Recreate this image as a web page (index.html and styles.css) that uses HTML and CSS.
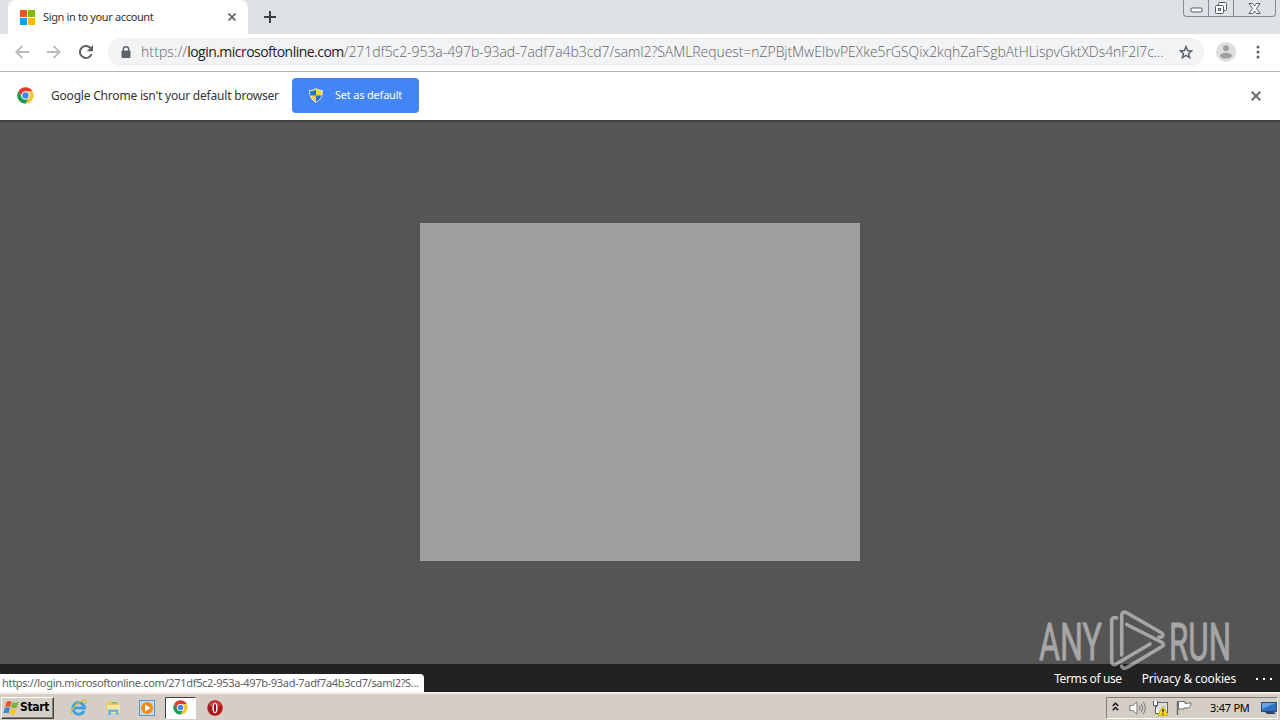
FILE: index.html
```html
<!DOCTYPE html>
<html lang="en">
<head>
    <meta charset="UTF-8">
    <title>Sign in to your account</title>
    <link rel="stylesheet" href="styles.css">
</head>
<body>
    <svg class="defs" width="0" height="0">
        <symbol id="chrome" viewBox="0 0 48 48">
            <circle cx="24" cy="24" r="23" fill="#fff"/>
            <path fill="#e33b2e" d="M4 12.500A23 23 0 0 1 44 12.500H24A11.500 11.500 0 0 0 14 29.800z"/>
            <path fill="#fbc52d" d="M44 12.500A23 23 0 0 1 24 47L34 29.800A11.500 11.500 0 0 0 24 12.500z"/>
            <path fill="#179c52" d="M4 12.500A23 23 0 0 0 24 47L34 29.800A11.500 11.500 0 0 1 14 29.800z"/>
            <circle cx="24" cy="24" r="11.500" fill="#fff"/>
            <circle cx="24" cy="24" r="9" fill="#4285f4"/>
        </symbol>
    </svg>

    <!-- Tab strip -->
    <div class="tabstrip">
        <div class="tab">
            <svg class="favicon" width="15" height="15" viewBox="0 0 15 15">
                <path fill="#f25022" d="M0 0h7v7H0z"/>
                <path fill="#7fba00" d="M8 0h7v7H8z"/>
                <path fill="#00a4ef" d="M0 8h7v7H0z"/>
                <path fill="#ffb900" d="M8 8h7v7H8z"/>
            </svg>
            <span class="tab-title">Sign in to your account</span>
            <svg class="tab-close" width="8" height="8" viewBox="0 0 8 8" stroke="#5f6368" stroke-width="1.700"><path d="M.5.5l7 7M7.500.5l-7 7"/></svg>
        </div>
        <svg class="new-tab" width="12" height="12" viewBox="0 0 12 12" stroke="#3c4043" stroke-width="2"><path d="M6 0v12M0 6h12"/></svg>
        <div class="window-buttons">
            <span class="win-btn">
                <svg width="13" height="6" viewBox="0 0 13 6"><rect x="1" y="1" width="11" height="4" rx="1" fill="#fff" stroke="#555b66"/></svg>
            </span>
            <span class="win-btn">
                <svg width="14" height="14" viewBox="0 0 14 14" fill="#fff" stroke="#555b66"><rect x="4.500" y="1.500" width="8" height="8" rx="1"/><rect x="1.500" y="4.500" width="8" height="8" rx="1"/><rect x="4.500" y="7.500" width="2" height="2"/></svg>
            </span>
            <span class="win-btn win-close">
                <svg width="13" height="11" viewBox="0 0 13 11"><path fill="#fff" stroke="#555b66" d="M1 .5h3.500l2 2.500 2-2.500H12L8.500 5.500 12 10.500H8.500l-2-2.500-2 2.500H1l3.500-5z"/></svg>
            </span>
        </div>
    </div>

    <!-- Toolbar -->
    <div class="toolbar">
        <svg class="nav-icon" width="14" height="14" viewBox="0 0 14 14" fill="none" stroke="#b9bbbe" stroke-width="1.800"><path d="M14 7H1.500M7.500.8L1.300 7l6.200 6.200"/></svg>
        <svg class="nav-icon" width="14" height="14" viewBox="0 0 14 14" fill="none" stroke="#b9bbbe" stroke-width="1.800"><path d="M0 7h12.500M6.500.8L12.700 7l-6.200 6.200"/></svg>
        <svg class="nav-icon" width="14" height="14" viewBox="0 0 14 14" fill="none" stroke="#5f6368" stroke-width="2"><path d="M12.600 9A6 6 0 1 1 11.300 2.800L12 3.600"/><path fill="#5f6368" stroke="none" d="M14 0v6.200H7.800z"/></svg>
        <div class="omnibox">
            <svg class="lock" width="10" height="12" viewBox="0 0 10 12"><rect x="0.500" y="4.500" width="9" height="7.500" rx="1" fill="#5f6368"/><path fill="none" stroke="#5f6368" stroke-width="1.400" d="M2.300 5V3.200a2.700 2.500 0 0 1 5.400 0V5"/></svg>
            <span class="url"><span class="scheme">https://</span><span class="host">login.microsoftonline.com</span><span class="path">/271df5c2-953a-497b-93ad-7adf7a4b3cd7/saml2?SAMLRequest=nZPBjtMwEIbvPEXke5rGSQix2kqhZaFSgbAtHLispvGktXDs4nF2l7c...</span></span>
            <svg class="star" width="14" height="14" viewBox="0 0 14 14"><path fill="none" stroke="#5f6368" stroke-width="1.500" d="M7 1.600l1.600 3.900 4.200.3-3.200 2.700 1 4.100L7 10.400l-3.600 2.200 1-4.100L1.200 5.800l4.200-.3z"/></svg>
        </div>
        <svg class="avatar" width="20" height="20" viewBox="0 0 20 20"><circle cx="10" cy="10" r="10" fill="#dedede"/><circle cx="10" cy="6.300" r="3" fill="#a0a0a0"/><ellipse cx="10" cy="13.700" rx="6" ry="2.900" fill="#a0a0a0"/></svg>
        <svg class="menu-dots" width="4" height="14" viewBox="0 0 4 14" fill="#5f6368"><circle cx="2" cy="2" r="1.500"/><circle cx="2" cy="7" r="1.500"/><circle cx="2" cy="12" r="1.500"/></svg>
    </div>

    <!-- Default browser bar -->
    <div class="infobar">
        <svg width="17" height="17"><use href="#chrome"/></svg>
        <span class="infobar-text">Google Chrome isn't your default browser</span>
        <button class="default-btn">
            <svg width="14" height="15" viewBox="0 0 14 15">
                <path fill="#f4d03a" stroke="#e8edf0" d="M7 .6C5 2 3 2.400.7 2.400.5 8 2.500 12 7 14.300c4.500-2.300 6.500-6.300 6.300-11.900C11 2.400 9 2 7 .6z"/>
                <path fill="#2373c8" d="M7 1.800V7.500h5.500c.3-1.500.3-3 .2-4.400C10.500 3 8.500 2.600 7 1.800zM7 7.500H1.500C2.300 10.500 4.200 12.500 7 13.800z" transform="matrix(-1 0 0 1 14 0)"/>
            </svg>
            <span>Set as default</span>
        </button>
        <svg class="infobar-close" width="10" height="10" viewBox="0 0 10 10" stroke="#696b6e" stroke-width="2"><path d="M.7.7l8.600 8.600M9.300.7L.7 9.300"/></svg>
    </div>

    <!-- Page -->
    <main class="page">
        <div class="login-box"></div>
        <footer class="footer">
            <span class="terms">Terms of use</span>
            <span class="privacy">Privacy &amp; cookies</span>
            <span class="more"><i></i><i></i><i></i></span>
        </footer>
        <div class="status-bubble"><span>https://login.microsoftonline.com/271df5c2-953a-497b-93ad-7adf7a4b3cd7/saml2?S...</span></div>
        <svg class="watermark" width="210" height="66" viewBox="0 0 210 66">
            <g class="watermark-text">
                <text x="2" y="50" textLength="63" lengthAdjust="spacingAndGlyphs">ANY</text>
                <text x="132" y="50" textLength="62" lengthAdjust="spacingAndGlyphs">RUN</text>
            </g>
            <g fill="none" stroke="#fff" stroke-width="3.600" stroke-linejoin="round" stroke-linecap="round">
                <path d="M79.500 8c-3-1-4.800 0-4.800 3V51.500c0 3 2 4 4.500 2.500L113 34"/>
                <path d="M84.700 45V5.500c0-3 2-4.300 4.500-3L124 22.500c3.500 2 1.500 5.500-2 4.500"/>
                <path d="M89.700 14.500l34.500 17.500c3 1.500 3 3.500 0 5L90 57.500c-3 1.500-5.300.500-5.300-1.500"/>
            </g>
        </svg>
    </main>

    <!-- Taskbar -->
    <div class="taskbar">
        <button class="start">
            <svg width="17" height="16" viewBox="0 0 17 16">
                <path fill="#e8562a" d="M3.500 2C5.500.6 7 .8 8.600 1.800L7.200 7.200C5.500 6.200 4 6.300 2 7.300z"/>
                <path fill="#76b43a" d="M9.400 2.200c2 1 4 .9 6.200-.4L14 7.200c-2 1.200-4 1.300-6 .4z"/>
                <path fill="#3f86d8" d="M1.800 8.200c2-1.200 3.700-1 5.200-.1L5.500 13.500C4 12.500 2.300 12.500.3 13.600z"/>
                <path fill="#f7c52c" d="M7.800 8.600c2 1 4 .9 6-.3l-1.600 5.500c-2 1.200-4 1.200-5.900.2z"/>
            </svg>
            <span>Start</span>
        </button>
        <div class="quick">
            <span class="task">
                <svg width="17" height="17" viewBox="0 0 17 17" fill="none"><path stroke="#3da2e2" stroke-width="3" d="M14 11.800A5.800 5.800 0 1 1 14.500 9H4"/><path stroke="#e6b93c" stroke-width="1.300" d="M2 15.500C-1 14 4 6 11 2.300c4-2 6-1 4.300 2.200"/></svg>
            </span>
            <span class="task">
                <svg width="16" height="16" viewBox="0 0 16 16"><path fill="#e9c862" d="M1 3l1-1.500h4L7 3h7v9H1z"/><path fill="#f8e6a0" d="M2 5h13v8H2z"/><path fill="#6bb5de" d="M3 9.500h10.500V15H11v-3H6v3H3z"/><path fill="#7dbb57" d="M7 2h5v1.500H7z"/></svg>
            </span>
            <span class="task">
                <svg width="16" height="16" viewBox="0 0 16 16"><rect x=".5" y=".5" width="15" height="15" fill="#c4dcf2" stroke="#5d93c8"/><circle cx="8" cy="8" r="6" fill="#f08a1d"/><path fill="#fff" d="M6 4.500L11.500 8 6 11.500z"/></svg>
            </span>
            <span class="task active">
                <svg width="15" height="15"><use href="#chrome"/></svg>
            </span>
            <span class="task">
                <svg width="16" height="16" viewBox="0 0 16 16"><circle cx="8" cy="8" r="7.700" fill="#b3151b"/><path fill="#d9413f" d="M2 5a7 7 0 0 1 12 0c-3 2-9 2-12 0z"/><ellipse cx="8" cy="8" rx="2.600" ry="5.300" fill="#fff"/><ellipse cx="8" cy="8" rx="1.100" ry="4.300" fill="#8d0f14"/></svg>
            </span>
        </div>
        <div class="tray">
            <svg class="chevron" width="7" height="9" viewBox="0 0 7 9" fill="none" stroke="#111" stroke-width="1.400"><path d="M.7 4L3.500 1.200 6.300 4M.7 8.300l2.800-2.800 2.800 2.800"/></svg>
            <svg class="speaker" width="17" height="14" viewBox="0 0 17 14" fill="none" stroke="#777"><path fill="#fff" d="M.8 4.500h3L8 .8v12.400L3.800 9.500h-3z"/><path d="M10.300 4.500q1.600 2.500 0 5M12.300 2.700q3 4.300 0 8.600M14.300 1q4 6 0 12"/></svg>
            <svg class="network" width="17" height="16" viewBox="0 0 17 16"><rect x="4.500" y="2.500" width="11" height="10" fill="#d7dde2" stroke="#666"/><path fill="#fff" stroke="#555" d="M1.500 1v4.500h4V1M3.500 5.500v8h4"/><path fill="#ffd91c" stroke="#b39300" stroke-width=".6" d="M11 6l5.300 9.500H5.700z"/><path stroke="#222" stroke-width="1.400" d="M11 9v3.300M11 13.300v1.300"/></svg>
            <svg class="flag" width="17" height="15" viewBox="0 0 17 15"><path fill="#fff" stroke="#6b6b6b" d="M2.500 1.500h6.500v2l6-.7q.8 3.400-3 5.200H8V9H2.500z"/><path stroke="#6b6b6b" stroke-width="1.500" d="M1.500 1v14"/></svg>
            <span class="clock">3:47 PM</span>
            <svg class="desktop" width="16" height="14" viewBox="0 0 16 14"><path fill="#2d6fc0" stroke="#244b7d" d="M.5 1.500h15v9H.5z"/><path fill="#64a4e4" d="M1 2h14L1 8z"/><path fill="#31465e" d="M4 11h9l2 2H6z"/></svg>
        </div>
    </div>
</body>
</html>
```

FILE: styles.css
```css
* {
    box-sizing: border-box;
}
body {
    margin: 0;
    width: 1280px;
    height: 720px;
    overflow: hidden;
    display: flex;
    flex-direction: column;
    font-family: "Noto Sans", "Open Sans", sans-serif;
    font-size: 11px;
    color: #333;
    white-space: nowrap;
}
svg {
    display: block;
    flex: none;
}
.defs {
    position: absolute;
}
button {
    font: inherit;
    border: none;
    padding: 0;
}
/* Tab strip */
.tabstrip {
    height: 34px;
    flex: none;
    display: flex;
    align-items: flex-start;
    background: #dee1e6;
    padding-left: 8px;
}
.tab {
    width: 240px;
    height: 34px;
    display: flex;
    align-items: center;
    padding: 0 12px;
    background: #fff;
    border-radius: 8px 8px 0 0;
}
.tab-title {
    margin-left: 8px;
    padding-bottom: 2px;
    letter-spacing: -0.36px;
}
.tab-close {
    margin-left: auto;
}
.new-tab {
    margin: 11px 0 0 16px;
}
.window-buttons {
    display: flex;
    height: 17px;
    margin: 0 4px 0 auto;
    border: 1px solid #858b96;
    border-top: none;
    border-radius: 0 0 4px 4px;
}
.win-btn {
    width: 25px;
    display: flex;
    align-items: center;
    justify-content: center;
    border-right: 1px solid #858b96;
}
.win-btn:first-child {
    padding-top: 4px;
}
.win-close {
    width: 41px;
    border-right: none;
}
/* Toolbar */
.toolbar {
    height: 38px;
    flex: none;
    display: flex;
    align-items: center;
    padding: 0 20px 1px 15px;
    border-bottom: 1px solid #b6b4b6;
    background: #fff;
}
.nav-icon {
    margin-right: 18px;
}
.omnibox {
    width: 1096px;
    height: 28px;
    display: flex;
    align-items: center;
    margin-left: -3px;
    padding: 0 11px 0 13px;
    border-radius: 14px;
    background: #f1f3f4;
}
.url {
    margin-left: 10px;
    padding-bottom: 1px;
    font-family: "Open Sans", sans-serif;
    font-size: 14px;
    font-weight: 300;
    color: #5f6368;
}
.scheme {
    letter-spacing: 0.1px;
}
.host {
    color: #202124;
    font-weight: 400;
    letter-spacing: -0.53px;
}
.path {
    letter-spacing: -0.06px;
}
.star {
    margin-left: auto;
}
.avatar {
    margin-left: 12px;
}
.menu-dots {
    margin-left: auto;
}
/* Default browser bar */
.infobar {
    height: 49px;
    flex: none;
    display: flex;
    align-items: center;
    padding: 0 19px 1px 17px;
    background: #fff;
    border-bottom: 1px solid #3c3c3c;
}
.infobar-text {
    margin-left: 17px;
    padding-bottom: 1px;
    width: 241px;
    font-size: 12px;
    letter-spacing: -0.2px;
}
.default-btn {
    width: 127px;
    height: 35px;
    display: flex;
    align-items: center;
    padding-left: 17px;
    border-radius: 4px;
    background: #4285f4;
    color: #fff;
}
.default-btn span {
    margin-left: 12px;
    padding-bottom: 2px;
    letter-spacing: -0.2px;
}
.infobar-close {
    margin-left: auto;
}
/* Page */
.page {
    position: relative;
    flex: 1;
    display: flex;
    flex-direction: column;
    align-items: center;
    background: linear-gradient(#484848, #555 3px);
}
.login-box {
    width: 440px;
    height: 338px;
    margin-top: 102px;
    background: #9f9f9f;
}
.footer {
    width: 100%;
    height: 28px;
    margin-top: auto;
    display: flex;
    align-items: center;
    justify-content: flex-end;
    padding-right: 8px;
    background: #222;
    color: #fff;
    font-size: 12px;
}
.terms {
    letter-spacing: -0.38px;
}
.privacy {
    margin-left: 20px;
    letter-spacing: -0.18px;
}
.more {
    display: flex;
    gap: 5px;
    margin-left: 20px;
    padding-top: 2px;
}
.more i {
    width: 2px;
    height: 2px;
    background: #fff;
}
.status-bubble {
    position: absolute;
    left: 0;
    bottom: 0;
    width: 424px;
    height: 18px;
    padding-left: 2px;
    line-height: 18px;
    letter-spacing: -0.32px;
    border-radius: 0 4px 0 0;
    background: #fff;
    color: #606060;
}
.watermark {
    position: absolute;
    left: 1037px;
    top: 489px;
    overflow: visible;
    opacity: 0.48;
}
.watermark-text {
    font-family: Roboto, sans-serif;
    font-size: 52px;
    fill: #fff;
    stroke: #fff;
    stroke-width: 0.8px;
}
/* Taskbar */
.taskbar {
    height: 28px;
    flex: none;
    display: flex;
    align-items: center;
    padding: 1px 2px 0 1px;
    background: #d4cec6;
    border-top: 2px solid #f2efea;
}
.start {
    width: 53px;
    height: 22px;
    display: flex;
    align-items: center;
    padding-left: 1px;
    background: #d4cec6;
    border: 1px solid;
    border-color: #fff #404040 #404040 #fff;
    box-shadow: inset -1px -1px #848078;
    color: #000;
    font-family: "DejaVu Sans Condensed", "DejaVu Sans", sans-serif;
    font-size: 12px;
    font-weight: bold;
}
.start span {
    padding-bottom: 1px;
    letter-spacing: -0.3px;
}
.quick {
    display: flex;
    margin-left: 9px;
    gap: 3px;
}
.task {
    width: 31px;
    height: 22px;
    display: flex;
    align-items: center;
    justify-content: center;
}
.task.active {
    background: #fff;
    border: 1px solid;
    border-color: #404040 #fff #fff #404040;
}
.tray {
    width: 172px;
    height: 22px;
    display: flex;
    align-items: center;
    margin-left: auto;
    padding-left: 5px;
    border: 1px solid;
    border-color: #848078 #fff #fff #848078;
    color: #000;
}
.chevron {
    margin-bottom: 3px;
}
.speaker {
    margin-left: 10px;
}
.network {
    margin-left: 6px;
}
.flag {
    margin-left: 7px;
}
.clock {
    margin-left: 17px;
    padding-bottom: 1px;
    letter-spacing: -0.25px;
}
.desktop {
    margin-left: auto;
}
```
